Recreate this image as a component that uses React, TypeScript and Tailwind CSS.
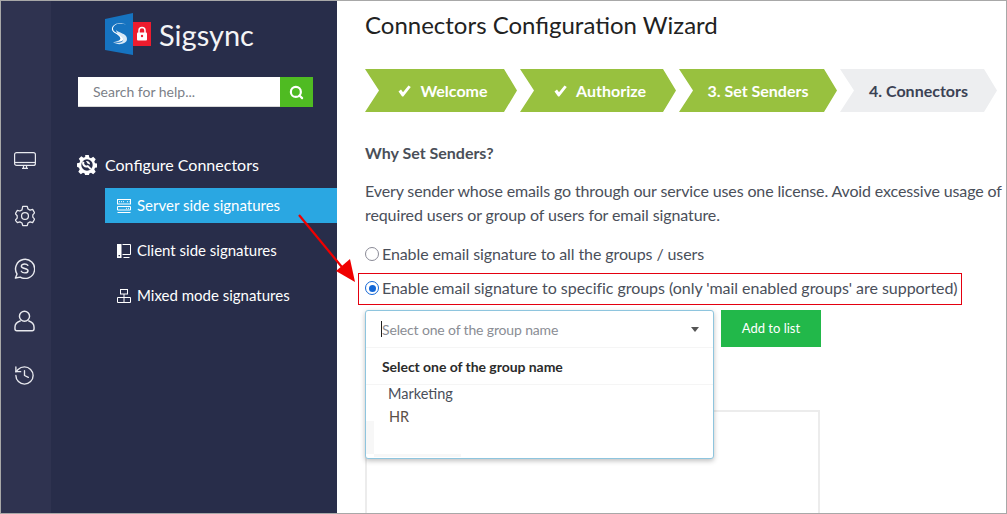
import React from 'react';
import { Search, History } from 'lucide-react';

const font = { fontFamily: 'Lato, sans-serif' };

const MonitorOutline = () => (
  <svg width="22" height="17" viewBox="0 0 22 17" fill="none" stroke="#e8e9ee" strokeWidth="1.200">
    <rect x=".6" y=".6" width="20.800" height="12.800" rx="2" />
    <path d="M.6 10.500h20.800" />
    <path d="M8 16.300h6M9.500 13.500v2.500M12.500 13.500v2.500" />
  </svg>
);

const GearHex = () => (
  <svg width="20" height="22" viewBox="0 0 22 24" fill="none" stroke="#e8e9ee" strokeWidth="1.400" strokeLinejoin="round">
    <path d="M8.500 1.500h5l.8 2.800 2.300 1.200 2.800-.8 2.200 3.800-2 2.200v2.600l2 2.200-2.200 3.800-2.800-.8-2.300 1.200-.8 2.800h-5l-.8-2.800-2.300-1.200-2.800.8L.4 16.500l2-2.200v-2.600l-2-2.200 2.200-3.800 2.800.8 2.300-1.200z" />
    <circle cx="11" cy="12" r="3.800" />
  </svg>
);

const ChatDollar = () => (
  <svg width="21" height="21" viewBox="0 0 22 22" fill="none" stroke="#e8e9ee" strokeWidth="1.500" strokeLinecap="round" strokeLinejoin="round">
    <path d="M3.200 16.800A10 10 0 1 1 6.500 20L1.500 21z" />
    <path d="M14.500 7.700c-.6-1-1.800-1.400-3.400-1.400-2 0-3.400.9-3.400 2.300 0 3.100 7 1.700 7 4.700 0 1.400-1.500 2.300-3.500 2.300-1.700 0-3-.6-3.600-1.700" />
  </svg>
);

const UserOutline = () => (
  <svg width="21" height="22" viewBox="0 0 22 23" fill="none" stroke="#e8e9ee" strokeWidth="1.500" strokeLinejoin="round">
    <circle cx="11" cy="6.500" r="5.300" />
    <path d="M7 11.300c-3 .9-6 2.800-6 6.700v1.700c0 1.300.8 2 2 2h16c1.200 0 2-.7 2-2V18c0-3.900-3-5.800-6-6.700" />
  </svg>
);

const GearWrench = () => (
  <svg width="20" height="20" viewBox="0 0 20 20">
    <path
      fill="#fff"
      fillRule="evenodd"
      d="M8.200 0h3.600l.5 2.500 1.700.7 2.200-1.400 2.500 2.500-1.400 2.200.7 1.700 2.500.5v3.600l-2.500.5-.7 1.700 1.400 2.200-2.500 2.500-2.200-1.400-1.700.7-.5 2.500H8.200l-.5-2.500-1.700-.7-2.200 1.400-2.500-2.500 1.400-2.200-.7-1.700L0 11.800V8.200l2.500-.5.700-1.700-1.400-2.200 2.500-2.500 2.200 1.400 1.700-.7zM10 4.300a5.700 5.700 0 1 0 0 11.400 5.700 5.700 0 0 0 0-11.400z"
    />
    <path d="M6.500 6.800a3.200 3.200 0 0 0 4.300 4.300l3 3" fill="none" stroke="#fff" strokeWidth="2" />
    <path d="M9 6l1.500 2.500L13 9.500a3.300 3.300 0 0 0-4-3.500z" fill="#fff" />
  </svg>
);

const ServerIcon = () => (
  <svg width="14" height="14" viewBox="0 0 14 14" fill="none" stroke="#fff" strokeWidth="1">
    <rect x=".5" y=".5" width="13" height="4.500" />
    <path d="M2 2.700h6M10 2.700h2.500" strokeDasharray="1 1" />
    <path d="M.5 7.500h13v3.500H.5zM.5 13.500h13" />
    <path d="M9 9.300h3" strokeDasharray="1 1" />
  </svg>
);

const ClientIcon = () => (
  <svg width="14" height="14" viewBox="0 0 14 14">
    <path d="M0 0h4.500v14H0z" fill="#fff" />
    <path d="M1.500 11h1.500v1.200H1.500z" fill="#282d4a" />
    <path d="M5.500 .5h8v10h-8M6.500 13.500h6" fill="none" stroke="#fff" />
  </svg>
);

const MixedIcon = () => (
  <svg width="14" height="14" viewBox="0 0 14 14" fill="none" stroke="#fff">
    <rect x="3.500" y=".5" width="7" height="4.500" />
    <path d="M7 5v3.500M.5 8.500h13M.5 13.500h13M.5 8.500v5M13.500 8.500v5M7 8.500v5" />
  </svg>
);

const HeavyCheck = () => (
  <svg width="13" height="12" viewBox="0 0 13 12" fill="currentColor">
    <path d="M.5 6.500L3 4.600l2 2.600L10.500.5 12.800 2 5.300 11.500h-1.200z" />
  </svg>
);

const Logo = () => (
  <svg width="47" height="42" viewBox="0 0 47 42">
    <path d="M0 6L28 0v42L0 37z" fill="#1673c0" />
    <path d="M21 12c-5-3-13-1-13 4 0 5 11 4 11 9 0 3-5 5-11 3 7 1 9-2 6-5-3-3-8-4-7-8 1-4 9-7 14-3z" fill="#fff" />
    <path d="M11 17c2 3 11 3 11 9 0 5-9 7-14 3 6 2 11 0 10-3-1-3-6-4-7-9z" fill="#d8e8f6" />
    <rect x="28" y="9" width="18" height="24" fill="#ee1c2e" />
    <rect x="32" y="19.500" width="10" height="8" rx="1" fill="#fff" />
    <path d="M34 20v-2.500a3 3 0 0 1 6 0V20" fill="none" stroke="#fff" strokeWidth="1.500" />
    <circle cx="37" cy="23" r="1.200" fill="#ee1c2e" />
  </svg>
);

const steps = [
  { label: 'Welcome', done: true, active: true, width: 'w-[152px]', pad: 'pl-[4px]' },
  { label: 'Authorize', done: true, active: true, width: 'w-[156px]', pad: 'pl-[4px]' },
  { label: '3. Set Senders', done: false, active: true, width: 'w-[158px]', pad: 'pl-0' },
  { label: '4. Connectors', done: false, active: false, width: 'w-[157px]', pad: 'pl-0' },
];

const RailItem = ({ children, className }: { children: React.ReactNode; className: string }) => (
  <div className={`flex h-[22px] items-center justify-center ${className}`}>{children}</div>
);

export default function App() {
  return (
    <div className="relative flex h-[514px] w-[1007px] overflow-hidden border border-[#a8a8a8] bg-white" style={font}>
      {/* icon rail */}
      <div className="flex w-[50px] shrink-0 flex-col bg-[#2f3350] pr-[3px] pt-[148px]">
        <RailItem className="">
          <MonitorOutline />
        </RailItem>
        <RailItem className="mt-[34px]">
          <GearHex />
        </RailItem>
        <RailItem className="mt-[30px]">
          <ChatDollar />
        </RailItem>
        <RailItem className="mt-[31px]">
          <UserOutline />
        </RailItem>
        <RailItem className="mt-[32px]">
          <History size={23} color="#e8e9ee" strokeWidth={1.4} />
        </RailItem>
      </div>

      {/* sidebar */}
      <div className="flex w-[286px] shrink-0 flex-col bg-[#282d4a]">
        <div className="ml-[54px] mt-[12px] flex h-[42px] items-center">
          <Logo />
          <span className="ml-[7px] text-[29px] leading-none text-[#f4f4f6]">Sigsync</span>
        </div>
        <div className="ml-[27px] mt-[22px] flex h-[30px] w-[235px]">
          <div className="flex w-[202px] items-center border-b border-[#d8d8d8] bg-white pl-[15px] text-[14px] text-[#7c7f88]">Search for help...</div>
          <div className="flex w-[33px] items-center justify-center bg-[#4fbb22]">
            <Search size={15} color="#fff" strokeWidth={3.5} />
          </div>
        </div>
        <div className="ml-[26px] mt-[46px] flex h-[24px] items-center gap-[8px] text-[16px] text-white">
          <GearWrench />
          <span>Configure Connectors</span>
        </div>
        <div className="ml-[54px] mt-[11px] flex h-[35px] items-center gap-[6px] bg-[#2aa7e2] pl-[12px] text-[15px] text-white">
          <ServerIcon />
          <span>Server side signatures</span>
        </div>
        <div className="ml-[54px] mt-[10px] flex h-[35px] items-center gap-[6px] pl-[12px] text-[15px] text-white">
          <ClientIcon />
          <span>Client side signatures</span>
        </div>
        <div className="ml-[54px] mt-[10px] flex h-[35px] items-center gap-[6px] pl-[12px] text-[15px] text-white">
          <MixedIcon />
          <span>Mixed mode signatures</span>
        </div>
      </div>

      {/* main */}
      <div className="relative min-w-0 flex-1 pl-[28px] pt-[9px]">
        <h1 className="whitespace-nowrap text-[24px] leading-[30px] text-[#222]">Connectors Configuration Wizard</h1>

        <div className="mt-[29px] flex h-[43px] gap-[3px]">
          {steps.map((s) => (
            <div
              key={s.label}
              className={`flex shrink-0 items-center justify-center gap-[9px] text-[16px] font-bold [clip-path:polygon(0_0,calc(100%-13px)_0,100%_50%,calc(100%-13px)_100%,0_100%,14px_50%)] ${s.pad} ${s.width} ${s.active ? 'bg-[#98c13f] text-white' : 'bg-[#edeef0] text-[#3b4254]'}`}
            >
              {s.done && <HeavyCheck />}
              <span>{s.label}</span>
            </div>
          ))}
        </div>

        <div className="mt-[31px] text-[16px] font-bold leading-[20px] text-[#4a4f58]">Why Set Senders?</div>
        <div className="mt-[16px] w-[700px] text-[16px] leading-[24px] text-[#4a4f5a]">
          <div className="whitespace-nowrap tracking-[-0.13px]">Every sender whose emails go through our service uses one license. Avoid excessive usage of</div>
          <div className="whitespace-nowrap tracking-[-0.1px]">required users or group of users for email signature.</div>
        </div>

        <div className="mt-[17px] flex h-[20px] items-center gap-[3px] whitespace-nowrap text-[16px] tracking-[-0.1px] text-[#4a4f5a]">
          <span className="h-[14px] w-[14px] rounded-full border-[1.5px] border-[#8a8a96]" />
          <span>Enable email signature to all the groups / users</span>
        </div>
        <div className="-ml-[7px] mt-[9px] flex h-[32px] w-[604px] items-center gap-[3px] whitespace-nowrap border border-[#e4000f] pb-[2px] pl-[6px] text-[16px] tracking-[-0.04px] text-[#4a4f5a]">
          <span className="flex h-[14px] w-[14px] items-center justify-center rounded-full border-[1.5px] border-[#1266d6]">
            <span className="h-[7px] w-[7px] rounded-full bg-[#1266d6]" />
          </span>
          <span>Enable email signature to specific groups (only 'mail enabled groups' are supported)</span>
        </div>

        <div className="mt-[5px] flex h-[38px] items-start gap-[8px]">
          <div className="h-[38px] w-[348px]" />
          <button className="h-[37px] w-[100px] bg-[#22b84a] text-[13px] text-white">Add to list</button>
        </div>

        {/* list box partly behind the open dropdown */}
        <div className="mt-[62px] h-[120px] w-[455px] border-x-2 border-t-2 border-[#ececec]" />

        {/* open dropdown */}
        <div className="absolute left-[28px] top-[309px] h-[149px] w-[349px] rounded-[3px] border border-[#8ec5de] bg-white shadow-[0_2px_5px_rgba(0,0,0,0.25)]">
          <div className="flex h-[37px] items-center border-b border-[#f5f5f5] pl-[15px] pr-[14px] text-[14px] tracking-[-0.15px] text-[#8a8d94]">
            <span className="h-[16px] w-px bg-[#222]" />
            <span className="flex-1">Select one of the group name</span>
            <span className="h-0 w-0 border-x-[4px] border-t-[5px] border-x-transparent border-t-[#555]" />
          </div>
          <div className="flex h-[37px] items-center border-b border-[#f5f5f5] pl-[16px] text-[14px] font-bold tracking-[-0.05px] text-[#2b2b2b]">Select one of the group name</div>
          <div className="ml-[22px] mt-[-3px] flex h-[23px] items-center text-[14.500px] text-[#4a4f5a]">Marketing</div>
          <div className="ml-[23px] flex h-[23px] items-center text-[14.500px] text-[#5a5048]">HR</div>
          {/* faint leftover of the box behind */}
          <div className="absolute left-0 top-[110px] h-[33px] w-[8px] bg-[#f7f7f7]" />
          <div className="absolute left-[8px] top-[143px] h-[3px] w-[87px] bg-[#f7f7f7]" />
        </div>
      </div>

      {/* annotation arrow */}
      <svg className="pointer-events-none absolute left-[295px] top-[212px]" width="65" height="70" viewBox="0 0 65 70">
        <path d="M3 2L50 59" stroke="#f00000" strokeWidth="2.200" />
        <path d="M59 69L40 58L54 46z" fill="#f00000" />
      </svg>
    </div>
  );
}
